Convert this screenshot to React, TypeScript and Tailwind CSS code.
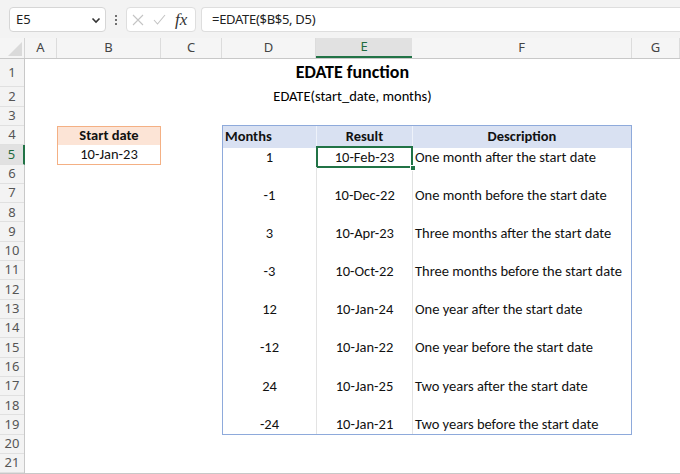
import React from "react";

const cellFont = { fontFamily: "Carlito, Lato, 'Liberation Sans', sans-serif" };

const rows: [string, string, string][] = [
  ["1", "10-Feb-23", "One month after the start date"],
  ["-1", "10-Dec-22", "One month before the start date"],
  ["3", "10-Apr-23", "Three months after the start date"],
  ["-3", "10-Oct-22", "Three months before the start date"],
  ["12", "10-Jan-24", "One year after the start date"],
  ["-12", "10-Jan-22", "One year before the start date"],
  ["24", "10-Jan-25", "Two years after the start date"],
  ["-24", "10-Jan-21", "Two years before the start date"],
];

const colHeaders: { label: string; w: string; active?: boolean }[] = [
  { label: "A", w: "w-[32px]" },
  { label: "B", w: "w-[104px]" },
  { label: "C", w: "w-[61px]" },
  { label: "D", w: "w-[94px]" },
  { label: "E", w: "w-[96px]", active: true },
  { label: "F", w: "w-[220px]" },
  { label: "G", w: "w-[48px]" },
];

const rowHeights = [
  "h-[28px]",
  "h-[20px]",
  "h-[19px]",
  ...Array.from({ length: 18 }, () => "h-[19.3px]"),
];

export default function App() {
  return (
    <div
      className="w-[680px] h-[474px] overflow-hidden bg-white flex flex-col"
      style={{ fontFamily: "'Noto Sans', 'Open Sans', sans-serif" }}
    >
      {/* formula bar */}
      <div className="h-[38px] shrink-0 bg-[#f3f3f3] flex items-start pt-[7px]">
        <div className="ml-[9px] w-[97px] h-[25px] bg-white border border-[#d6d6d6] rounded-[4px] flex items-center justify-between pl-[6px] pr-[4px]">
          <span className="text-[13px] text-[#222]">E5</span>
          <svg width="10" height="10" viewBox="0 0 10 10">
            <path d="M1.5 3.5 L5 7 L8.5 3.5" fill="none" stroke="#333" strokeWidth="1.6" />
          </svg>
        </div>
        <div className="w-[20px] h-[25px] flex flex-col items-center justify-center gap-[2px]">
          <span className="w-[2px] h-[2px] bg-[#444] rounded-full" />
          <span className="w-[2px] h-[2px] bg-[#444] rounded-full" />
          <span className="w-[2px] h-[2px] bg-[#444] rounded-full" />
        </div>
        <div className="w-[70px] h-[25px] bg-white border border-[#dedede] rounded-[4px] flex items-center pl-[5px] gap-[9px]">
          <svg width="12" height="12" viewBox="0 0 12 12">
            <path d="M1 1 L11 11 M11 1 L1 11" stroke="#c4c4c4" strokeWidth="1.1" />
          </svg>
          <svg width="13" height="11" viewBox="0 0 13 11">
            <path d="M1 6 L4.5 10 L12 1" fill="none" stroke="#c4c4c4" strokeWidth="1.1" />
          </svg>
          <span
            className="text-[17px] italic text-[#333] leading-none"
            style={{ fontFamily: "'Liberation Serif', serif" }}
          >
            fx
          </span>
        </div>
        <div className="ml-[5px] flex-1 h-[25px] bg-white border border-[#dedede] border-r-0 rounded-l-[4px] flex items-center pl-[10px]">
          <span className="text-[13px] tracking-[-0.3px] text-[#222]">=EDATE($B$5, D5)</span>
        </div>
      </div>

      {/* column headers */}
      <div className="h-[21px] shrink-0 flex bg-[#f5f5f5] border-b border-[#c8c8c8]">
        <div className="w-[25px] border-r border-[#d4d4d4] flex items-end justify-end">
          <svg width="14" height="14" viewBox="0 0 14 14" className="mb-[2px] mr-[2px]">
            <path d="M14 0 L14 14 L0 14 Z" fill="#dadada" />
          </svg>
        </div>
        {colHeaders.map((c) => (
          <div
            key={c.label}
            className={`${c.w} flex items-center justify-center text-[13px] ${
              c.active
                ? "bg-[#e1e1e1] text-[#1e6b40] border-b-2 border-[#217346]"
                : "text-[#444] border-r border-[#dcdcdc]"
            }`}
          >
            {c.label}
          </div>
        ))}
      </div>

      {/* body */}
      <div className="flex flex-1 border-b border-[#c8c8c8]">
        <div className="w-[25px] shrink-0 flex flex-col bg-[#f3f3f3] border-r border-[#c8c8c8]">
          {rowHeights.map((h, i) => (
            <div
              key={i}
              className={`${h} shrink-0 flex items-center justify-center text-[13px] border-b border-[#e0e0e0] ${
                i === 4
                  ? "bg-[#e1e1e1] text-[#1e6b40] border-r-2 border-r-[#217346] -mr-px"
                  : "text-[#555]"
              }`}
            >
              {i + 1}
            </div>
          ))}
        </div>

        <div
          className="grid grid-cols-[32px_104px_61px_94px_96px_220px_48px] grid-rows-[28px_20px_19px_repeat(18,19.3px)] text-[#111]"
          style={cellFont}
        >
          <div className="col-start-1 col-span-7 row-start-1 flex items-end justify-center pb-[1px]">
            <span className="text-[18px] font-bold text-black">EDATE function</span>
          </div>
          <div className="col-start-1 col-span-7 row-start-2 flex items-center justify-center">
            <span className="text-[14.5px] text-black">EDATE(start_date, months)</span>
          </div>

          {/* start date box */}
          <div className="col-start-2 row-start-4 row-span-2 border border-[#f4b084] grid grid-rows-2 text-[14.5px]">
            <div className="bg-[#fce4d6] flex items-center justify-center font-bold">Start date</div>
            <div className="bg-white flex items-end justify-center leading-[15px] pb-[2px]">10-Jan-23</div>
          </div>

          {/* table */}
          <div className="col-start-4 col-span-3 row-start-4 row-span-16 -mt-[1px] border border-[#8eaadb] grid grid-cols-[93px_96px_1fr] grid-rows-[repeat(16,1fr)] text-[14.5px]">
            <div className="bg-[#d9e1f2] flex items-center pl-[2px] font-bold">Months</div>
            <div className="bg-[#d9e1f2] flex items-center justify-center font-bold border-l border-[#eef2fa]">Result</div>
            <div className="bg-[#d9e1f2] flex items-center justify-center font-bold border-l border-[#eef2fa]">Description</div>
            {Array.from({ length: 15 }, (_, k) => {
              const i = k + 1;
              const data = i % 2 === 1 ? rows[(i - 1) / 2] : null;
              return (
                <React.Fragment key={i}>
                  <div className="flex items-end justify-center leading-[15px] pb-[2px]">{data?.[0] ?? ""}</div>
                  <div className="relative flex items-end justify-center leading-[15px] pb-[2px] border-l border-[#e3e3e3]">
                    {data?.[1] ?? ""}
                    {i === 1 && (
                      <>
                        <div className="absolute -left-px -right-px -top-[2px] -bottom-px border-2 border-[#217346]" />
                        <div className="absolute -right-[4px] -bottom-[4px] w-[6px] h-[6px] bg-[#217346] border border-white" />
                      </>
                    )}
                  </div>
                  <div className="flex items-end pl-[2px] leading-[15px] pb-[2px] border-l border-[#e3e3e3] whitespace-nowrap">
                    {data?.[2] ?? ""}
                  </div>
                </React.Fragment>
              );
            })}
          </div>
        </div>
      </div>
    </div>
  );
}
